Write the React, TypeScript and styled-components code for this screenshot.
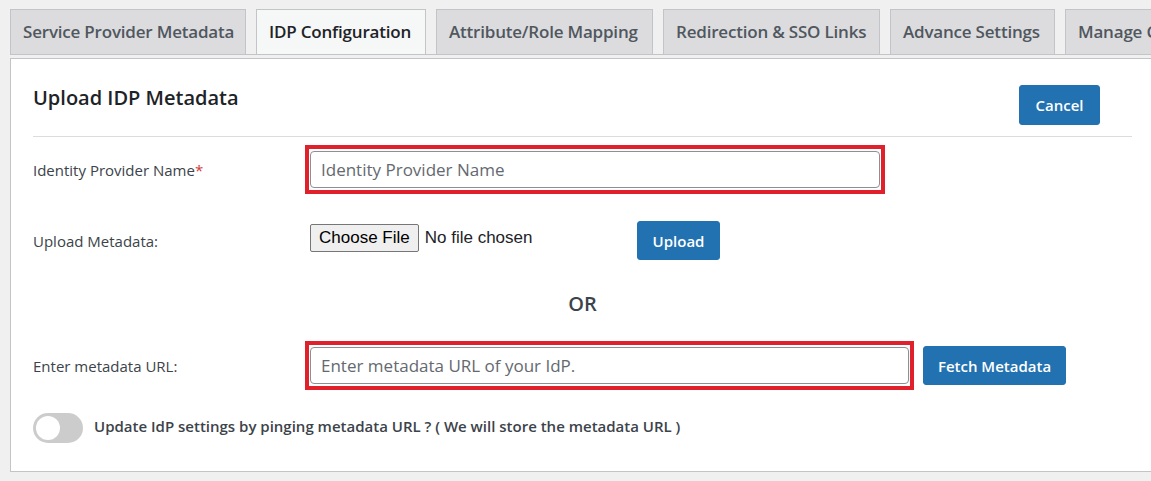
import styled, { createGlobalStyle } from "styled-components";

const GlobalStyle = createGlobalStyle`
  html, body {
    margin: 0;
    padding: 0;
    background: #f0f0f1;
    overflow: hidden;
  }
  body {
    font-family: "Open Sans", "Noto Sans", sans-serif;
    color: #3c434a;
  }
  * {
    box-sizing: border-box;
  }
`;

const tabs = [
  { label: "Service Provider Metadata", width: 236 },
  { label: "IDP Configuration", width: 170 },
  { label: "Attribute/Role Mapping", width: 217 },
  { label: "Redirection & SSO Links", width: 217 },
  { label: "Advance Settings", width: 165 },
  { label: "Manage Certificates", width: 200 },
];

export default function App() {
  return (
    <>
      <GlobalStyle />
      <Page>
        <TabBar>
          {tabs.map((t) => (
            <Tab
              key={t.label}
              $width={t.width}
              $active={t.label === "IDP Configuration"}
            >
              {t.label}
            </Tab>
          ))}
        </TabBar>
        <Panel>
          <HeaderRow>
            <Heading>Upload IDP Metadata</Heading>
            <CancelButton $width={81} $height={40}>
              Cancel
            </CancelButton>
          </HeaderRow>
          <Divider />

          <FormRow>
            <Label>
              Identity Provider Name<Required>*</Required>
            </Label>
            <Highlight $width={580}>
              <TextInput placeholder="Identity Provider Name" />
            </Highlight>
          </FormRow>

          <FormRow $top={27}>
            <Label>Upload Metadata:</Label>
            <FileCell>
              <FileInput type="file" />
              <BlueButton $width={83} $height={39}>
                Upload
              </BlueButton>
            </FileCell>
          </FormRow>

          <OrText>OR</OrText>

          <FormRow>
            <Label>Enter metadata URL:</Label>
            <UrlCell>
              <Highlight $width={609}>
                <TextInput placeholder="Enter metadata URL of your IdP." />
              </Highlight>
              <BlueButton $width={143} $height={39}>
                Fetch Metadata
              </BlueButton>
            </UrlCell>
          </FormRow>

          <ToggleRow>
            <Toggle>
              <Knob />
            </Toggle>
            <ToggleText>
              Update IdP settings by pinging metadata URL ? ( We will store the
              metadata URL )
            </ToggleText>
          </ToggleRow>
        </Panel>
      </Page>
    </>
  );
}

const Page = styled.div`
  padding: 9px 0 0 10px;
  width: 1200px;
`;

const TabBar = styled.div`
  display: flex;
  gap: 10px;
  height: 46px;
  border-bottom: 1px solid #c3c4c7;
`;

const Tab = styled.div<{ $active?: boolean; $width: number }>`
  flex: none;
  width: ${(p) => p.$width}px;
  height: 45px;
  padding: 0 0 2px 12px;
  display: flex;
  align-items: center;
  font-size: 17px;
  font-weight: 600;
  letter-spacing: -0.2px;
  white-space: nowrap;
  overflow: hidden;
  border: 1px solid #c3c4c7;
  border-bottom: none;
  background: ${(p) => (p.$active ? "#f6f7f7" : "#dcdcde")};
  color: ${(p) => (p.$active ? "#1d2327" : "#50575e")};
`;

const Panel = styled.div`
  margin-top: 3px;
  width: 1145px;
  height: 414px;
  background: #fff;
  border: 1px solid #c3c4c7;
  border-right: none;
  padding: 24px 23px 0 22px;
`;

const HeaderRow = styled.div`
  display: flex;
  justify-content: space-between;
  align-items: flex-start;
  padding-right: 32px;
`;

const Heading = styled.h2`
  margin: 0;
  font-size: 20px;
  line-height: 30px;
  font-weight: 600;
  color: #1d2327;
`;

const BlueButton = styled.button<{ $width: number; $height: number }>`
  flex: none;
  width: ${(p) => p.$width}px;
  height: ${(p) => p.$height}px;
  background: #2271b1;
  color: #fff;
  border: 1px solid #2271b1;
  border-radius: 3px;
  font-family: "Open Sans", "Noto Sans", sans-serif;
  font-size: 15px;
  font-weight: 600;
  padding: 0;
  cursor: pointer;
`;

const CancelButton = styled(BlueButton)`
  margin-top: 2px;
`;

const Divider = styled.hr`
  margin: 11px 0 8px 0;
  border: none;
  border-top: 1px solid #dcdcde;
`;

const FormRow = styled.div<{ $top?: number }>`
  display: grid;
  grid-template-columns: 272px 1fr;
  align-items: center;
  margin-top: ${(p) => p.$top ?? 0}px;
`;

const Label = styled.div`
  font-size: 15px;
  color: #3c434a;
`;

const Required = styled.span`
  color: #d63638;
`;

const Highlight = styled.div<{ $width: number }>`
  width: ${(p) => p.$width}px;
  border: 4px solid #e0202a;
  padding: 2px 1px;
  background: #fff;
`;

const TextInput = styled.input`
  display: block;
  width: 100%;
  height: 37px;
  border: 1px solid #8c8f94;
  border-radius: 4px;
  padding: 0 10px;
  font-family: "Open Sans", "Noto Sans", sans-serif;
  font-size: 17px;
  color: #2c3338;
  &::placeholder {
    color: #646970;
  }
`;

const FileCell = styled.div`
  display: flex;
  align-items: center;
  padding-left: 5px;
`;

const FileInput = styled.input`
  width: 327px;
  font-family: "Liberation Sans", Arial, sans-serif;
  font-size: 17px;
  color: #1d2327;
  margin: -6px 0 0 0;

  &::file-selector-button {
    font-family: "Liberation Sans", Arial, sans-serif;
    font-size: 17px;
    height: 28px;
    padding: 0 8px;
    margin-right: 6px;
    background: #efefef;
    border: 1px solid #767676;
    border-radius: 2px;
    color: #000;
  }
`;

const OrText = styled.div`
  margin: 31px 0 24px 0;
  text-align: center;
  font-size: 20px;
  font-weight: 600;
  color: #3c434a;
  line-height: 26px;
`;

const UrlCell = styled.div`
  display: flex;
  align-items: center;
  gap: 9px;
`;

const ToggleRow = styled.div`
  display: flex;
  align-items: center;
  gap: 11px;
  margin-top: 23px;
`;

const Toggle = styled.div`
  flex: none;
  width: 50px;
  height: 30px;
  border-radius: 15px;
  background: #cccccc;
  display: flex;
  align-items: center;
  padding-left: 3px;
`;

const Knob = styled.span`
  width: 24px;
  height: 24px;
  border-radius: 50%;
  background: #fff;
`;

const ToggleText = styled.div`
  font-size: 15px;
  font-weight: 600;
  color: #3c434a;
  margin-top: -4px;
`;
